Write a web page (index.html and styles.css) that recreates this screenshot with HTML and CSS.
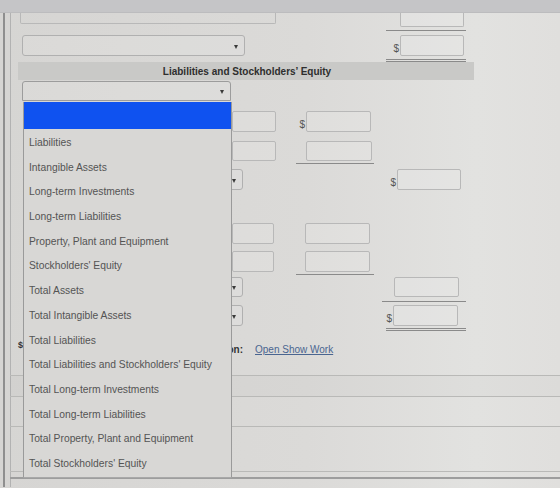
FILE: index.html
```html
<!DOCTYPE html>
<html lang="en">
<head>
<meta charset="utf-8">
<title>Balance Sheet</title>
<link rel="stylesheet" href="styles.css">
</head>
<body>
<div class="screen">
  <div class="topbar"></div>
  <div class="page">
    <div class="sheet">

      <div class="row r1">
        <div class="field wide flat"></div>
        <div class="tot underline"><span class="input w64 flat"></span></div>
      </div>

      <div class="row r2">
        <div class="select s-long"><span class="arrow"></span></div>
        <div class="tot dbl"><span class="cur">$</span><span class="input w64"></span></div>
      </div>

      <div class="section">Liabilities and Stockholders’ Equity</div>

      <div class="row r4">
        <div class="select s-open"><span class="arrow"></span></div>
      </div>

      <div class="row r5">
        <div class="box"><span class="input"></span></div>
        <div class="amt"><span class="cur">$</span><span class="input w65"></span></div>
      </div>

      <div class="row r6">
        <div class="box"><span class="input"></span></div>
        <div class="amt underline"><span class="input w66"></span></div>
      </div>

      <div class="row r7">
        <div class="select s-mid"><span class="arrow"></span></div>
        <div class="tot"><span class="cur">$</span><span class="input w64"></span></div>
      </div>

      <div class="row r8">
        <div class="box"><span class="input"></span></div>
        <div class="amt"><span class="input w65"></span></div>
      </div>

      <div class="row r9">
        <div class="box"><span class="input"></span></div>
        <div class="amt underline"><span class="input w65"></span></div>
      </div>

      <div class="row r10">
        <div class="select s-mid"><span class="arrow"></span></div>
        <div class="tot underline"><span class="input w65"></span></div>
      </div>

      <div class="row r11">
        <div class="select s-mid"><span class="arrow"></span></div>
        <div class="tot dbl"><span class="cur">$</span><span class="input w65"></span></div>
      </div>

      <div class="row r12">
        <div class="work-label"><span class="mark">$</span><span>Show Work for this question:</span></div>
        <a class="work-link" href="#">Open Show Work</a>
      </div>

      <div class="footer">
        <div class="band b1"></div>
        <div class="band b2"></div>
        <div class="band b3"></div>
        <div class="band b4"></div>
      </div>
    </div>
  </div>

  <div class="dropdown">
    <div class="opt-selected"></div>
    <ul class="options">
      <li>Liabilities</li>
      <li>Intangible Assets</li>
      <li>Long-term Investments</li>
      <li>Long-term Liabilities</li>
      <li>Property, Plant and Equipment</li>
      <li>Stockholders' Equity</li>
      <li>Total Assets</li>
      <li>Total Intangible Assets</li>
      <li>Total Liabilities</li>
      <li>Total Liabilities and Stockholders' Equity</li>
      <li>Total Long-term Investments</li>
      <li>Total Long-term Liabilities</li>
      <li>Total Property, Plant and Equipment</li>
      <li>Total Stockholders' Equity</li>
    </ul>
  </div>
</div>
</body>
</html>
```

FILE: styles.css
```css
* { box-sizing: border-box; }

html, body {
  margin: 0;
  padding: 0;
}

body {
  width: 560px;
  height: 488px;
  overflow: hidden;
  font-family: "Liberation Sans", Arial, sans-serif;
  background: #d9d8d6;
}

.screen {
  position: relative;
  width: 560px;
  height: 488px;
  overflow: hidden;
  background: linear-gradient(90deg, #d6d5d3 0%, #dbdad8 55%, #e2e2e0 85%, #e0dfdd 100%);
}

.topbar {
  height: 13px;
  background: #c5c5c7;
  border-bottom: 1px solid #bcbcbe;
  margin-bottom: -1px;
  position: relative;
  z-index: 1;
}

/* left frame: outer dark rule, then lighter inner rule */
.page {
  margin-left: 3px;
  border-left: 2px solid #8f8f8f;
  padding-left: 5px;
  height: 475px;
}

.sheet {
  border-left: 1px solid #b2b2b2;
  padding-left: 9px;
  height: 100%;
}

/* form grid: label | box | gap | amount | gap | total */
.row {
  display: grid;
  grid-template-columns: [lbl] 212px [box] 44px 20px [amt] 78px 12px [tot] 80px;
  align-items: start;
}

.input {
  display: inline-block;
  height: 100%;
  border: 1px solid #b8b8b8;
  border-radius: 2px;
  background: rgba(255, 255, 255, 0.12);
}

.input.flat { border-top: none; border-radius: 0 0 2px 2px; }
.w64 { width: 64px; }
.w65 { width: 65px; }
.w66 { width: 66px; }

.cur {
  font-size: 10px;
  color: #555;
  margin-right: 1px;
  align-self: flex-end;
  line-height: 1;
  padding-bottom: 2px;
}

.field.wide {
  grid-column: lbl / span 2;
  height: 12px;
  border: 1px solid #b8b8b8;
  border-top: none;
  border-radius: 0 0 2px 2px;
}

.box { grid-column: box; height: 100%; display: flex; }
.box .input { width: 44px; }

.amt, .tot {
  display: flex;
  justify-content: flex-end;
  align-items: stretch;
}
.amt { grid-column: amt; padding-right: 3px; }
.tot { grid-column: tot; padding-right: 2px; }

.amt .input, .tot .input { height: auto; }

.underline { border-bottom: 1px solid #8a8a8a; }
.dbl { border-bottom: 3px double #8a8a8a; }

.select {
  grid-column: lbl / span 2;
  position: relative;
  margin-left: 2px;
  border: 1px solid #b0b0b0;
  border-radius: 3px;
  background: rgba(255, 255, 255, 0.1);
}
.s-long { width: 223px; height: 21px; }
.s-open { width: 209px; height: 20px; border-color: #9c9c9c; border-radius: 3px 3px 0 0; }
.s-mid { width: 219px; margin-left: 4px; }

.arrow {
  position: absolute;
  right: 6px;
  top: 50%;
  margin-top: -1px;
  width: 0;
  height: 0;
  border-left: 2.5px solid transparent;
  border-right: 2.5px solid transparent;
  border-top: 4px solid #3a3a3a;
}

/* vertical rhythm of the rows */
.r1 { height: 19px; }
.r1 .tot { height: 19px; padding-bottom: 3px; }
.r1 .tot .input { width: 64px; }

.r2 { margin-top: 4px; }
.r2 .tot { height: 27px; padding-bottom: 3px; }

.section {
  margin-left: -2px;
  width: 456px;
  height: 18px;
  background: #c9c9c7;
  font-size: 10px;
  font-weight: bold;
  color: #2e2e2e;
  text-align: center;
  line-height: 19px;
  padding-left: 2px;
}

.r4 { margin-top: 1px; }

.r5 { margin-top: 10px; height: 21px; }
.r5 .amt { height: 21px; }

.r6 { margin-top: 9px; }
.r6 .box { height: 20px; }
.r6 .amt { height: 23px; padding-bottom: 2px; padding-right: 2px; }

.r7 { margin-top: 5px; }
.r7 .select { height: 21px; }
.r7 .tot { height: 21px; padding-right: 5px; }

.r8 { margin-top: 33px; }
.r8 .box, .r8 .amt { height: 21px; }
.r8 .amt { padding-right: 4px; }
.r8 .box .input, .r9 .box .input { width: 42px; }

.r9 { margin-top: 7px; }
.r9 .box { height: 21px; }
.r9 .amt { height: 24px; padding-bottom: 2px; padding-right: 4px; }

.r10 { margin-top: 2px; }
.r10 .select { height: 20px; }
.r10 .tot { height: 25px; padding-bottom: 4px; padding-right: 7px; margin-left: -4px; }

.r11 { margin-top: 3px; }
.r11 .select { height: 21px; }
.r11 .tot { height: 26px; padding-bottom: 2px; padding-right: 8px; }

.r12 {
  margin-top: 11px;
  height: 14px;
  display: flex;
  align-items: center;
  font-size: 10px;
}

.work-label {
  width: 225px;
  display: flex;
  justify-content: space-between;
  font-weight: bold;
  color: #333;
  margin-left: -2px;
  padding-left: 0;
}
.work-label .mark { font-size: 9px; margin-top: -4px; }

.work-link {
  margin-left: 12px;
  color: #4a6590;
  text-decoration: underline;
}

.footer {
  margin-top: 19px;
  margin-left: -10px;
  margin-right: -12px;
}

.band { border-top: 1px solid #b9b9b7; }
.b1 { height: 21px; background: rgba(0, 0, 0, 0.015); }
.b2 { height: 30px; }
.b3 { height: 45px; }
.b4 { height: 8px; border-bottom: 2px solid #9d9d9d; }

/* open list of the category select */
.dropdown {
  position: absolute;
  left: 23px;
  top: 102px;
  width: 209px;
  z-index: 5;
  border-left: 1px solid #9a9a9a;
  border-right: 1px solid #9a9a9a;
  border-bottom: 1px solid #a8a8a8;
  background: #d8d7d5;
}

.opt-selected {
  height: 27px;
  background: #0f52f0;
}

.options {
  list-style: none;
  margin: 0;
  padding: 2px 0 0 0;
}

.options li {
  height: 24.7px;
  line-height: 24.7px;
  padding-left: 5px;
  font-size: 10.3px;
  color: #545454;
  white-space: nowrap;
}
```
